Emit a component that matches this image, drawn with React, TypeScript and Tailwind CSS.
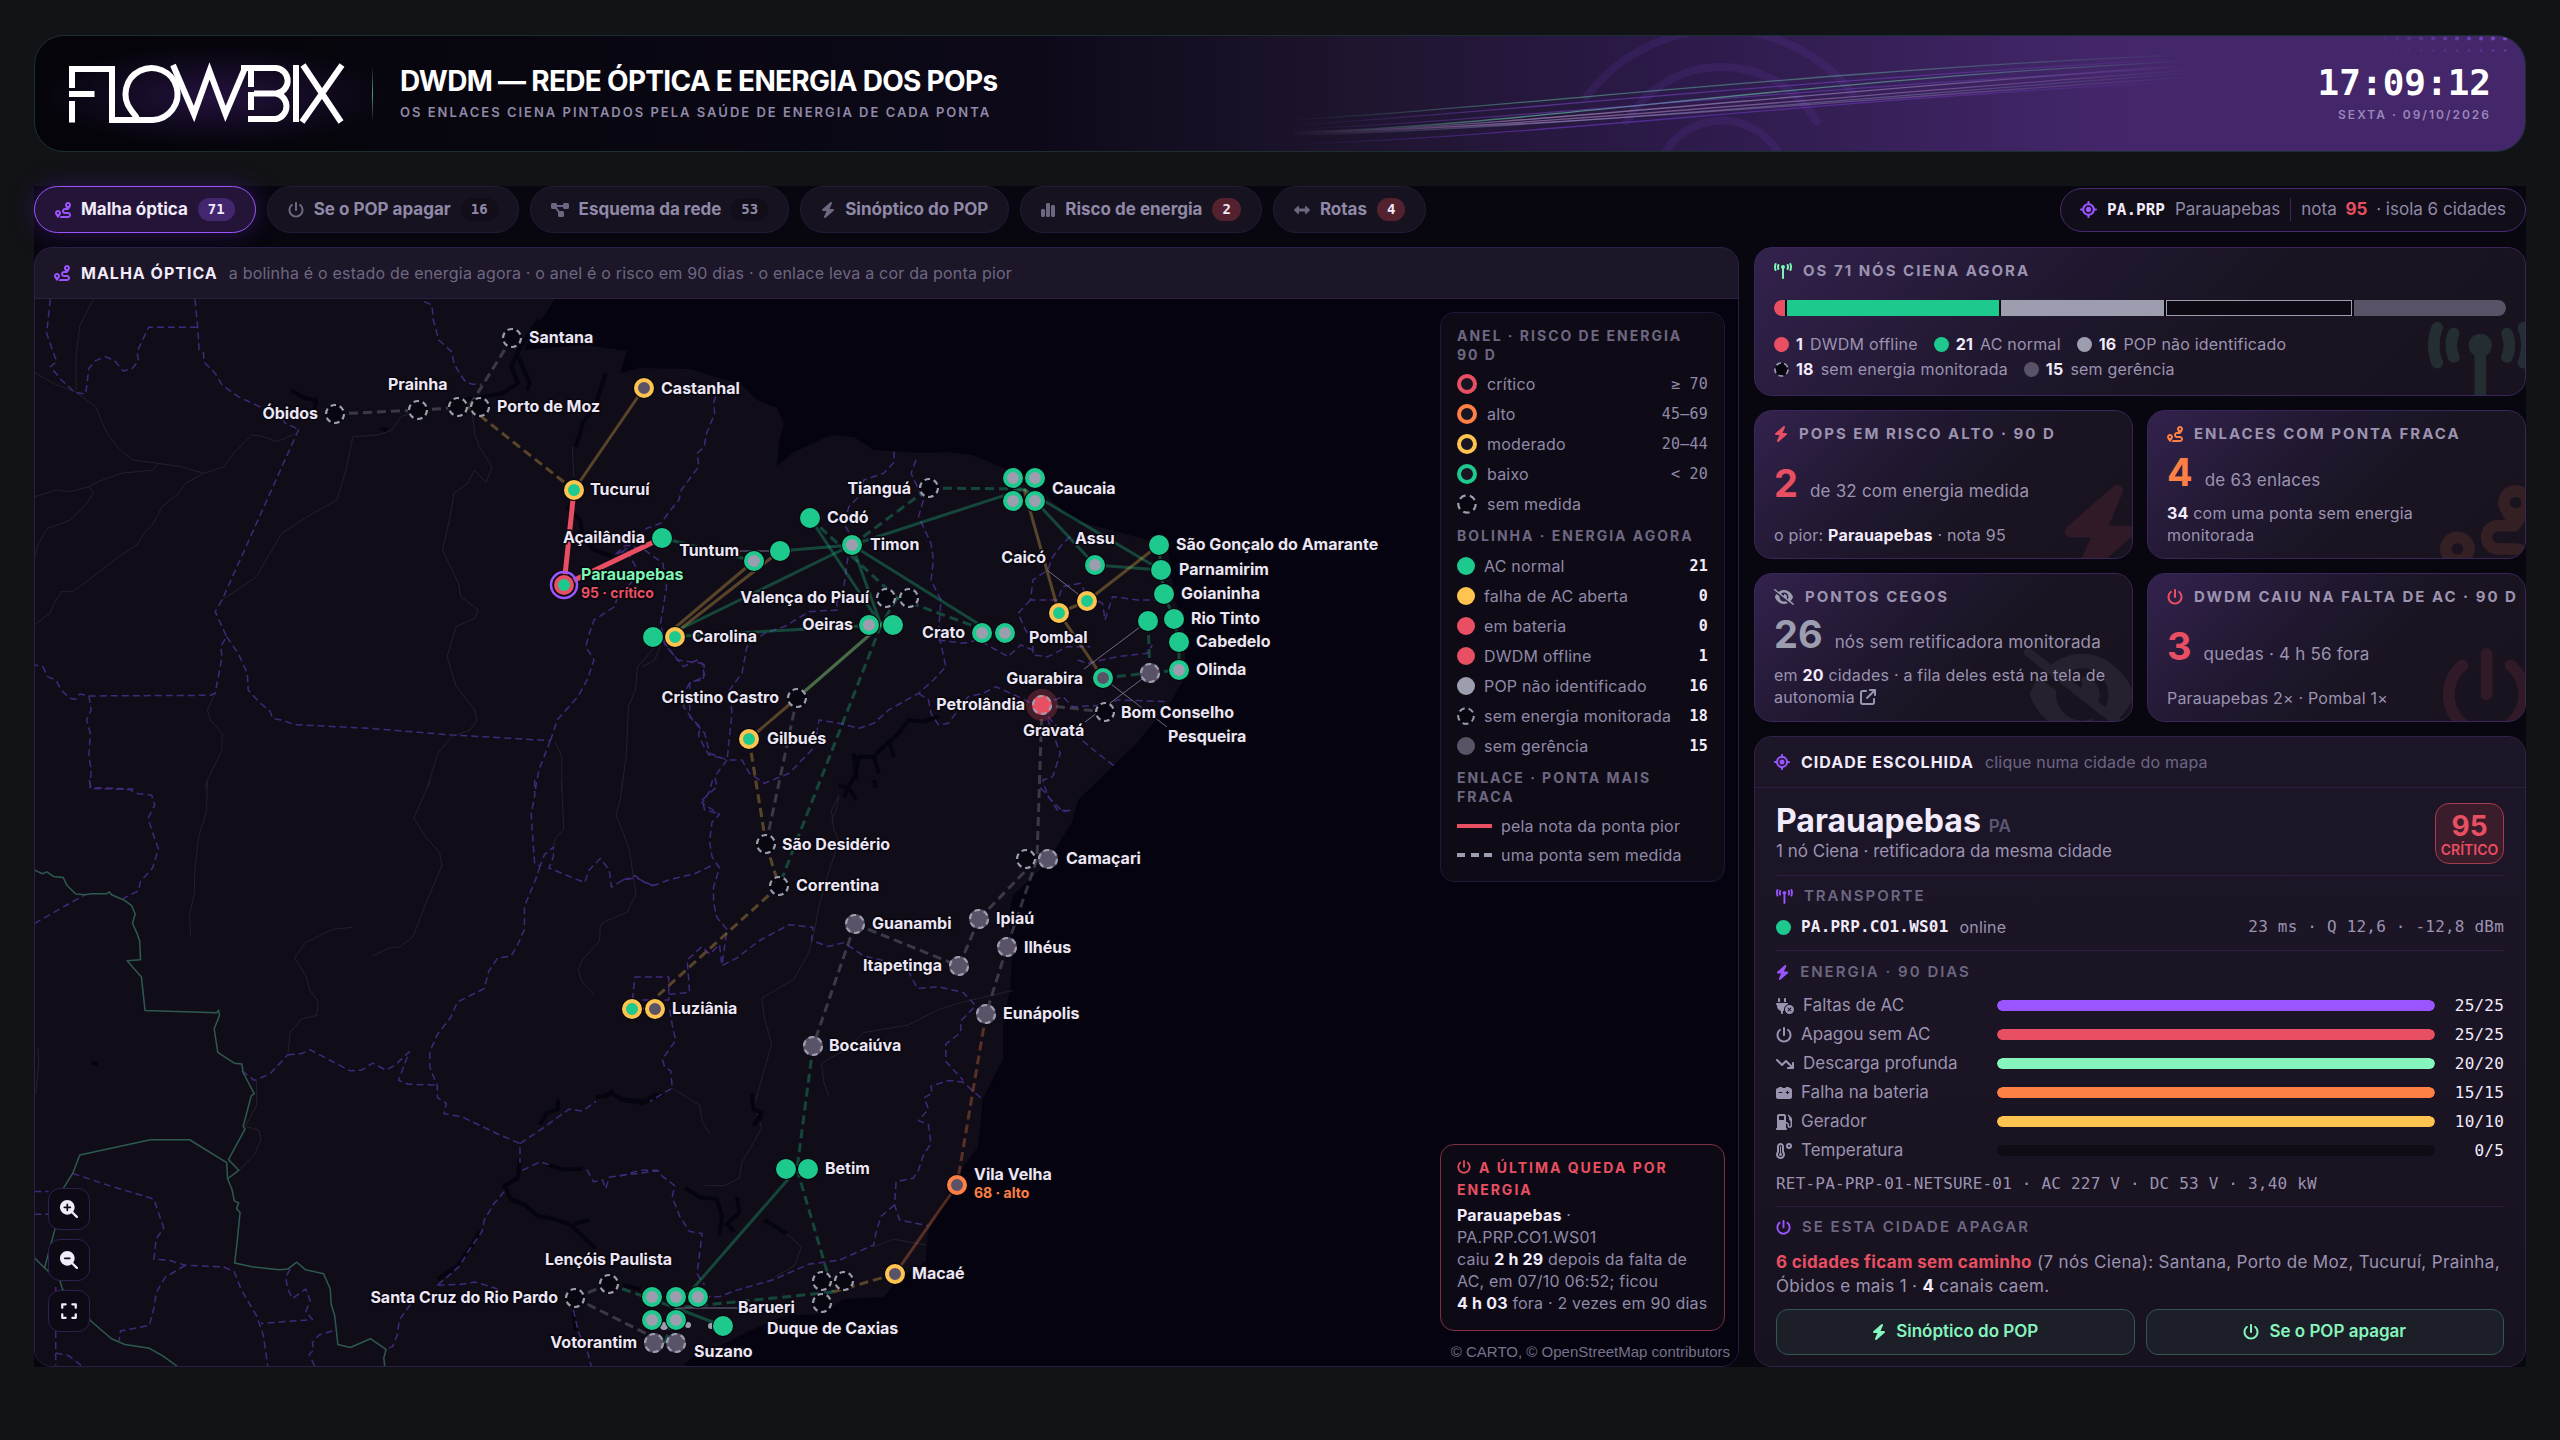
import React from "react";
import type { ReactNode } from "react";
import {
  FaArrowTrendDown,
  FaArrowUpRightFromSquare,
  FaBolt,
  FaCarBattery,
  FaChartSimple,
  FaDiagramProject,
  FaExpand,
  FaEyeSlash,
  FaGasPump,
  FaLeftRight,
  FaLocationCrosshairs,
  FaMagnifyingGlassMinus,
  FaMagnifyingGlassPlus,
  FaPlugCircleXmark,
  FaPowerOff,
  FaRoute,
  FaTemperatureHigh,
  FaTowerBroadcast,
} from "react-icons/fa6";
import type { IconType } from "react-icons";

const MONO = "font-['DejaVu_Sans_Mono',monospace]";

/* Glyphs that are not square keep their own proportions; the caller sets only the height. */
const ASPECT = new Map<IconType, string>([
  [FaTowerBroadcast, "aspect-[9/8]"],
  [FaPlugCircleXmark, "aspect-[9/8]"],
  [FaArrowTrendDown, "aspect-[9/8]"],
  [FaDiagramProject, "aspect-[9/8]"],
  [FaEyeSlash, "aspect-[5/4]"],
  [FaBolt, "aspect-[7/8]"],
  [FaChartSimple, "aspect-[7/8]"],
]);

function Glyph({ icon: Icon, className }: { icon: IconType; className: string }) {
  return <Icon className={`w-auto shrink-0 ${ASPECT.get(Icon) ?? "aspect-square"} ${className}`} />;
}

/* ---------- Header ---------- */

function Logo() {
  return (
    <svg viewBox="0 0 277 60" className="h-[60px] w-[277px] shrink-0 overflow-visible" fill="none" stroke="#fff" strokeWidth="6" role="img" aria-label="Flowbix">
      <defs>
        <radialGradient id="logoGlow">
          <stop offset="0" stopColor="#3a1c66" stopOpacity="0.55" />
          <stop offset="1" stopColor="#3a1c66" stopOpacity="0" />
        </radialGradient>
      </defs>
      <ellipse cx="145" cy="32" rx="175" ry="50" fill="url(#logoGlow)" stroke="none" />
      <path d="M3 24V5H43V56H84A26 26 0 1 0 62 46L68 54" />
      <path d="M0 30H25.500M3 37V58.500" />
      <path d="M104 1L125 50L140.500 7L156.500 50L176 4" strokeMiterlimit="10" />
      <path d="M172 4H207A12.800 12.800 0 0 1 207 29.500H185M207 29.500A13 13 0 0 1 207 55H179" />
      <path d="M182 4V23M182 28V46" />
      <path d="M227 1V58M234 1L272 58M273 1L233 58" />
    </svg>
  );
}

function HeaderArt() {
  const strands = [
    ["M0 84C140 74 380 36 640 20", "#6fd8b0", 0.45],
    ["M0 90C150 76 380 44 645 24", "#8a50e0", 0.5],
    ["M0 97C170 90 360 46 650 26", "#6fd8b0", 0.6],
    ["M0 98C170 90 380 56 650 31", "#e6c8ff", 0.45],
    ["M0 99C180 90 390 62 655 35", "#d9a8e8", 0.45],
    ["M0 100C190 92 400 64 655 38", "#9fb4d8", 0.4],
    ["M0 94C160 84 390 50 650 33", "#8a50e0", 0.45],
    ["M0 96C200 92 390 66 655 42", "#b48ad8", 0.45],
    ["M0 109C180 100 380 66 650 46", "#7d3fe0", 0.5],
  ] as const;
  return (
    <svg viewBox="0 0 1246 116" preserveAspectRatio="xMaxYMid slice" className="absolute inset-y-0 right-0 h-full w-1/2" fill="none" aria-hidden="true">
      <defs>
        <linearGradient id="strandFade" x1="0" x2="1" y1="0" y2="0">
          <stop offset="0" stopColor="#fff" stopOpacity="0" />
          <stop offset="0.04" stopColor="#fff" stopOpacity="0.1" />
          <stop offset="0.28" stopColor="#fff" />
          <stop offset="0.7" stopColor="#fff" stopOpacity="0.8" />
          <stop offset="1" stopColor="#fff" stopOpacity="0" />
        </linearGradient>
        <mask id="strandMask" maskUnits="userSpaceOnUse" x="0" y="0" width="920" height="116">
          <rect x="0" y="0" width="920" height="116" fill="url(#strandFade)" />
        </mask>
      </defs>
      <g stroke="#6b3bb0" strokeOpacity="0.17" strokeWidth="8" strokeLinecap="round">
        <path d="M307 61A168 168 0 0 1 573 58" />
        <path d="M347 86A110 110 0 0 1 537 86" />
        <path d="M386 116A66 66 0 0 1 498 116" />
      </g>
      <g mask="url(#strandMask)">
        <g strokeWidth="1.3">
          {strands.map(([d, c, o]) => (
            <path key={d} d={d} stroke={c} strokeOpacity={o} transform="translate(14 0) scale(1.36 1)" />
          ))}
        </g>
      </g>
      <g fill="#8a55e6">
        {Array.from({ length: 11 }, (_, i) => (
          <React.Fragment key={i}>
            <circle cx={1106 + i * 12} cy="3" r="2" fillOpacity={0.08 + i * 0.07} />
            <circle cx={1106 + i * 12} cy="15" r="1.500" fillOpacity={0.05 + i * 0.03} />
          </React.Fragment>
        ))}
      </g>
    </svg>
  );
}

function Header() {
  return (
    <header className="relative flex h-[117px] items-center overflow-hidden rounded-[30px] border border-[#1b2f2f] bg-[linear-gradient(90deg,#050409_0%,#08060f_20%,#0d0919_40%,#1d142c_52%,#2b1a48_65%,#44276b_84%,#44276b_100%)] px-[34px]">
      <HeaderArt />
      <Logo />
      <div className="relative ml-[26px] h-14 w-px bg-gradient-to-b from-transparent via-[#4f9a80] to-transparent" />
      <div className="relative ml-[27px] pb-[3px]">
        <h1 className="text-[28px] leading-9 font-bold tracking-tight text-white">DWDM — REDE ÓPTICA E ENERGIA DOS POPs</h1>
        <p className="mt-[3px] text-[13px] leading-5 font-semibold tracking-[2px] text-[#9089a8]">OS ENLACES CIENA PINTADOS PELA SAÚDE DE ENERGIA DE CADA PONTA</p>
      </div>
      <div className="relative ml-auto text-right">
        <div className={`${MONO} text-[36px] leading-10 font-bold tracking-normal text-white`}>17:09:12</div>
        <div className="mt-[2px] text-[12px] leading-5 font-semibold tracking-[2px] text-[#9a86b8]">SEXTA · 09/10/2026</div>
      </div>
    </header>
  );
}

/* ---------- Tabs ---------- */

const TABS: { icon: IconType; label: string; count?: string; alert?: boolean }[] = [
  { icon: FaRoute, label: "Malha óptica", count: "71" },
  { icon: FaPowerOff, label: "Se o POP apagar", count: "16" },
  { icon: FaDiagramProject, label: "Esquema da rede", count: "53" },
  { icon: FaBolt, label: "Sinóptico do POP" },
  { icon: FaChartSimple, label: "Risco de energia", count: "2", alert: true },
  { icon: FaLeftRight, label: "Rotas", count: "4", alert: true },
];

function Tabs() {
  return (
    <div className="flex items-center justify-between tracking-normal">
      <nav className="flex gap-[11px]">
        {TABS.map((t, i) => {
          const on = i === 0;
          return (
            <button
              key={t.label}
              className={`flex h-[47px] items-center gap-[10px] rounded-full border px-[20px] text-[17px] font-bold ${
                on ? "border-[#9a55ff] bg-[#241538] text-[#f1ebfb] shadow-[0_0_22px_#2c1650]" : "border-[#251b36] bg-[#17121f] text-[#9089a8]"
              }`}
            >
              <Glyph icon={t.icon} className={`h-4 ${on ? "text-[#9a55ff]" : "text-[#6d6782]"}`} />
              {t.label}
              {t.count && (
                <span
                  className={`${MONO} rounded-full px-[10px] text-[14px] leading-[23px] ${
                    on ? "bg-[#43266e] text-[#f1ebfb]" : t.alert ? "bg-[#54222f] text-[#f1ebfb]" : "bg-[#120e19] text-[#9089a8]"
                  }`}
                >
                  {t.count}
                </span>
              )}
            </button>
          );
        })}
      </nav>
      <div className="flex h-[44px] items-center gap-[10px] rounded-full border border-[#482a73] bg-[#120e19] px-[19px] text-[17px] text-[#9089a8]">
        <FaLocationCrosshairs className="size-[17px] text-[#9a55ff]" />
        <b className={`${MONO} text-[16px] text-[#f1ebfb]`}>PA.PRP</b>
        <span>Parauapebas</span>
        <span className="h-[23px] w-px bg-[#3a2856]" />
        <span>
          nota <b className="mx-1 text-[#e84f62]">95</b> · isola 6 cidades
        </span>
      </div>
    </div>
  );
}

/* ---------- Map base ---------- */

type Sheet = { at: string; borders: string[]; rivers: string[]; water: string[]; nations: string[] };

const SHEETS: Sheet[] = [
  {
    at: "translate(20 290) scale(.4592 .3333)",
    borders: [
      "66,28 62,80 58,130 68,170 80,215 66,230 90,270 120,308 143,312 150,235 165,212 185,200 205,210 225,243 245,235 258,212 255,185 280,112 387,112",
      "381,28 387,112 390,180 400,190 400,215 425,250 440,285 475,320 522,350 560,365 578,400 607,418",
      "607,418 440,930 425,965 450,1040 437,1070 440,1100 425,1210 415,1216 150,1218 130,1212 122,1228 108,1225 90,1200 78,1170 60,1160 50,1130 32,1125",
      "450,1040 475,1090 495,1150 497,1200 520,1235 545,1265 550,1285 570,1290 598,1304 760,1315 940,1335 1155,1352",
      "150,1218 155,1260 145,1290 153,1330 150,1400 155,1440 152,1493 248,1497",
      "880,35 897,45 900,90 912,150 940,185 945,220 955,245 970,275 985,283 1005,283",
      "1155,1352 1170,1290 1215,1220 1235,1170 1250,1110 1232,1070 1240,1030 1250,990 1295,950 1300,925 1330,880 1345,840 1320,780 1295,795 1320,765 1360,780 1400,820 1408,890 1395,1000 1405,1065 1445,1130 1475,1110 1490,1125 1488,1170 1460,1175 1450,1200 1445,1250 1460,1280 1480,1310 1478,1340 1500,1395 1530,1405",
      "1155,1352 1130,1440 1122,1500",
      "1515,320 1510,340 1513,370 1495,430 1490,470 1475,490 1478,530 1440,600 1435,630 1420,655 1395,700 1365,715 1345,740 1310,790",
    ],
    rivers: [
      "160,28 140,80 130,110 122,200 122,300",
      "32,248 80,285 120,305 165,350 175,385 190,430 215,475 245,510 300,520 350,530 400,550",
      "32,620 80,600 110,605 150,590 170,575 220,550 290,540 300,520",
      "150,590 160,610 140,650 110,690 60,715 40,760 32,800",
      "32,1005 65,970 75,940 90,905 115,905 150,870 215,800 255,765 270,730 290,700 310,650 345,610 360,580 400,550 445,530 465,490 505,435 530,440 560,455 600,430",
      "440,930 515,860 540,800 570,730 620,685 690,630 710,540 725,440 780,435 810,420 830,380 860,365",
      "985,370 990,430 1000,470 1028,530 1015,578 990,540 975,580 945,610 935,690 920,780 955,880 960,920 998,960 990,985 950,1010 930,1100 950,1190 990,1260 995,1290 980,1320 940,1340 910,1390 885,1500",
      "1206,560 1203,470",
      "425,1210 408,1260 415,1290 440,1330 440,1380 405,1480 405,1500",
      "1390,1060 1345,1130 1340,1200 1325,1250 1320,1400 1310,1500",
      "1165,1355 1180,1400 1180,1500",
    ],
    water: [
      "1130,90 1090,170 1070,230 1085,280 1050,310 990,325 930,340",
      "1085,200 1110,280 1105,300",
      "1275,250 1255,340 1225,400 1220,430 1210,470",
      "590,300 620,325 645,330 640,380",
      "1190,650 1220,690 1225,740 1250,780 1290,800",
      "785,415 800,420",
    ],
    nations: [],
  },
  {
    at: "translate(640 400) scale(.4974 .3333)",
    borders: [
      "510,155 512,185 490,220 450,240 440,290 420,320 410,370 425,410 420,450 410,560 395,610 398,630 340,635 290,680 250,700 215,740 205,820 180,870 185,940 175,1080",
      "555,180 545,220 570,300 560,350 585,430 590,480 585,540 605,600 600,700 615,800 590,840 560,880 500,930 470,970 440,985 400,970 360,960 355,1000 345,1050 300,1120 250,1150 220,1120 205,1080 175,1080 140,1060 130,1000 100,950 100,850 130,830 125,790 75,780 45,720",
      "865,410 850,430 830,470 820,510 790,540 785,600 840,600 850,560 885,550 900,590 930,610 935,660 950,590 1000,600 1060,600",
      "785,600 760,640 775,690 790,720 790,765 820,770 860,740 905,740",
      "600,720 650,730 680,720 740,770 765,735 790,750",
      "880,780 900,790 960,770 1020,760 1030,735",
      "560,880 580,900 585,940 600,975 620,970 640,930 660,890 690,880 715,860 760,890 800,920 850,890 870,920 940,915 960,900 1060,905",
      "820,950 850,1000 880,1010 920,1060 955,1100",
      "820,960 835,1020 845,1060 830,1130 810,1140 820,1190 850,1235 870,1230",
      "175,1080 150,1130 155,1160 125,1200 130,1230 155,1240",
    ],
    rivers: ["45,720 30,780 5,800", "400,1190 395,1230 385,1260"],
    water: ["600,950 570,965 540,960 520,1000 490,1040 470,1070 440,1070 435,1110 430,1130 410,1190", "470,1070 480,1120", "430,1060 435,1140", "500,1020 510,1070"],
    nations: [],
  },
  {
    at: "translate(20 780) scale(.4464 .3827)",
    borders: [
      "155,0 160,22 245,25 260,35 295,40 302,65 287,100 295,130 310,180 297,230 270,265 265,290 230,310",
      "32,375 145,300",
      "32,1075 64,1075",
      "32,1135 64,1135",
      "118,1028 200,1060 300,1095 310,1130 322,1170 305,1200 300,1252 335,1255 370,1268 455,1272 480,1285 495,1330 510,1360 530,1400 545,1450 555,1532",
      "370,1268 325,1300 305,1340 300,1380 290,1425 225,1440 222,1465",
      "80,1325 80,1530",
      "80,1497 110,1505 140,1532",
      "605,1278 595,1300 600,1330 610,1355 640,1330 650,1360 640,1390 655,1410 540,1420",
      "700,1440 670,1450 655,1470 658,1490 648,1500 660,1532",
      "600,718 630,715 650,705 740,760 765,758 790,740 820,758 840,745 872,710 848,785 870,795 930,797",
      "497,760 525,785 560,768 600,718",
      "1153,0 1153,40 1145,90 1153,220 1165,225 1175,195 1195,175 1195,200 1185,230 1265,268 1275,235 1300,205 1320,235 1325,280 1350,262 1380,255 1420,278",
      "1165,225 1155,260 1130,330 1130,390 1115,430 1100,460 1070,465 1050,500 1040,545 980,580 965,620 935,665 918,710 918,750 935,800 935,830 955,845 950,872 990,880 1070,925 1120,950 1120,1000",
      "1085,1075 1060,1110 1040,1150 1035,1180 1005,1230 985,1270 935,1320",
      "1120,950 1165,915 1230,860 1260,865 1290,840",
      "1125,1020 1165,998 1185,1005",
      "1270,1018 1285,1050 1305,1045 1312,1068 1320,1038 1370,1030 1440,1020",
      "935,1320 985,1318 1020,1312 1070,1330",
      "875,1370 850,1410 845,1450 835,1480 820,1488",
      "1240,1385 1250,1440 1270,1490 1280,1532",
    ],
    rivers: [
      "420,0 418,80 400,150 392,230 390,300 380,350 382,405",
      "920,0 905,40 882,100 910,150 940,190 945,225 910,320 880,410 850,437 830,437 790,460",
      "745,385 700,390 640,425 615,465 640,510 650,550 668,580 665,615 630,625 605,660 600,718",
      "530,785 530,850 505,905 535,915 540,940 525,980 490,1020",
      "1213,0 1218,130 1200,150 1195,175",
      "1350,0 1345,50 1335,90 1365,180 1380,300 1360,345 1310,370 1300,380 1298,420 1260,470 1250,495 1260,530 1285,560",
      "40,700 42,740 35,820",
    ],
    water: [
      "1165,900 1180,870 1205,860 1205,835",
      "1290,830 1325,820 1350,835 1395,845 1440,820",
      "1120,990 1115,1040 1085,1060 1100,1095 1130,1110 1160,1140 1190,1145 1230,1160 1250,1180 1290,1225",
      "1240,1160 1275,1150",
      "1180,1005 1220,1018 1260,1016",
      "935,1305 980,1270 1010,1220 1030,1180",
      "1310,830 1330,810",
      "1350,1320 1390,1330",
      "1240,1390 1245,1440",
      "160,738 175,742",
    ],
    nations: [
      "32,235 50,245 60,240 75,252 97,255 105,275 125,298 145,300 160,297 195,297 200,292 205,300 235,315 250,328 258,350 252,375 262,400 268,420 270,470 240,472 272,515 280,602 440,608 445,602 447,615 435,650 443,712 480,740 497,742 500,765 525,820 518,825 500,905 504,912 467,992 490,1020 465,1042 475,1070 480,1100 490,1105 485,1120 493,1130 487,1200 481,1262 520,1272 580,1280 600,1278 620,1260 640,1280 680,1290 695,1330 697,1370 705,1400 712,1475 740,1483 785,1460 820,1488 815,1510 817,1532",
      "465,1042 463,1000 380,940 292,940 134,980 118,1028 98,1065 78,1175 55,1275",
      "32,1248 55,1275 90,1310 95,1330 160,1415 205,1460 235,1475 290,1485 320,1505 352,1532",
    ],
  },
  {
    at: "translate(620 780) scale(.4974 .3827)",
    borders: [
      "186,0 180,30 165,60 200,90 185,110 180,160 185,200 200,230 188,280 188,320 195,360 215,390 205,485 235,465 280,420 340,378 388,385 385,420 420,435 450,425 490,460 540,475 580,500 598,545 640,540 690,555 715,590 685,630 685,660 655,690 655,735 690,785",
      "5,262 30,250 50,268 70,275 100,260 150,245 190,220",
      "25,575 30,515 98,515 98,575 25,575",
      "98,560 140,555 135,470 165,435 180,455 200,430 205,485",
      "100,600 105,640 112,680 85,730 90,750 102,760 105,805 60,840",
      "725,830 690,790 660,785 625,800 628,818 612,830 620,860 600,890 620,900 625,950 610,980 600,1020 590,1040 555,1050 552,1110 562,1150 620,1165",
      "552,1110 525,1140 515,1180 510,1215 440,1255 380,1265 310,1305 230,1335 200,1350 150,1350",
      "0,1035 40,1020 75,1020 85,1035 110,1060 105,1090 120,1140 140,1180 165,1185 155,1290 170,1320",
      "845,20 860,40 880,80 910,80",
    ],
    rivers: [
      "440,40 425,80 430,130 440,160 415,260 400,330 390,400 380,450 350,520 285,570 290,620 305,690 285,780 270,850 285,910 245,1000 240,1040 210,1060 170,1060",
      "105,805 160,850 165,890 180,925",
      "790,550 740,565 690,580 640,600 580,640 490,660 460,700 405,740 410,790 420,825",
      "615,1215 550,1200 510,1220",
      "330,1180 365,1220 350,1270 310,1300",
    ],
    water: ["440,15 460,20 475,50", "510,0 515,20", "265,820 268,860 285,870 270,900 285,880", "130,1065 160,1090 195,1095 205,1140 200,1190", "235,1090 240,1130 215,1160 230,1180", "290,1150 335,1185", "0,835 50,840 75,820"],
    nations: [],
  },
];

const OCEAN =
  "M555 299L541 320L528 342L524 350L585 345L627 351L620 373L640 368L690 369L718 378L740 383L757 400L777 408L784 423L779 443L777 466L794 452L831 435L854 437L874 450L919 453L948 452L973 455L1008 470L1048 497L1073 520L1118 532L1167 545L1175 600L1185 633L1185 677L1172 700L1137 743L1112 767L1078 800L1072 822L1053 853L1038 872L1013 895L1008 918L1013 948L1010 990L1003 1025L1003 1059L983 1098L978 1147L958 1174L938 1212L928 1232L926 1262L899 1278L884 1297L844 1299L819 1314L784 1316L749 1331L720 1346L695 1354L682 1367H1740V299Z";

/* ---------- Optical network ---------- */

const G = "#1dc98c";
const Y = "#ffc34f";
const O = "#ff8044";
const R = "#e84f62";
const N = "#9c9eb0";
const D = "#5a5368";

type Link = [number, number, number, number, string, boolean?];
const LINKS: Link[] = [
  [512, 338, 469, 407, N, true],
  [335, 414, 418, 410, N, true],
  [418, 410, 469, 407, N, true],
  [469, 407, 574, 490, Y, true],
  [644, 388, 574, 490, Y],
  [662, 538, 754, 561, G],
  [780, 551, 852, 545, G],
  [664, 637, 754, 561, Y],
  [670, 637, 780, 551, Y],
  [664, 637, 852, 545, G],
  [664, 637, 881, 625, G],
  [810, 518, 881, 625, G],
  [810, 518, 897, 598, G, true],
  [852, 545, 881, 625, G],
  [852, 545, 993, 633, G],
  [852, 545, 929, 488, G, true],
  [929, 488, 1024, 489, G, true],
  [852, 545, 1024, 489, G],
  [897, 598, 993, 633, G, true],
  [897, 598, 881, 625, G, true],
  [1024, 489, 1095, 565, G],
  [1024, 489, 1161, 570, G],
  [1095, 565, 1161, 570, G],
  [1024, 489, 1059, 613, Y],
  [1059, 613, 1087, 601, Y],
  [1087, 601, 1159, 545, Y],
  [1059, 613, 1103, 678, Y],
  [1159, 545, 1161, 570, G],
  [1161, 570, 1164, 594, G],
  [1164, 594, 1174, 619, G],
  [1174, 619, 1179, 642, G],
  [1179, 642, 1179, 670, G],
  [1148, 621, 1150, 673, G, true],
  [1150, 673, 1179, 670, G, true],
  [1103, 678, 1150, 673, G, true],
  [1042, 705, 1105, 712, N, true],
  [1042, 705, 1037, 859, N, true],
  [881, 625, 797, 698, Y],
  [881, 625, 797, 698, G],
  [797, 698, 749, 739, Y],
  [749, 739, 766, 844, Y, true],
  [797, 698, 766, 844, N, true],
  [881, 625, 779, 886, G, true],
  [766, 844, 779, 886, Y, true],
  [779, 886, 643, 1009, Y, true],
  [855, 924, 959, 966, N, true],
  [959, 966, 979, 919, N, true],
  [979, 919, 1037, 859, N, true],
  [1037, 859, 1007, 947, N, true],
  [1007, 947, 986, 1014, N, true],
  [986, 1014, 957, 1185, O, true],
  [957, 1185, 895, 1274, O],
  [895, 1274, 833, 1292, Y, true],
  [855, 924, 813, 1046, N, true],
  [813, 1046, 797, 1169, G, true],
  [797, 1169, 676, 1308, G],
  [797, 1169, 833, 1292, G, true],
  [833, 1292, 676, 1308, G, true],
  [676, 1308, 723, 1326, G],
  [609, 1284, 676, 1308, G, true],
  [575, 1298, 609, 1284, N, true],
  [575, 1298, 665, 1343, N, true],
  [676, 1308, 665, 1343, G, true],
];

const LEADERS = [
  [738, 551, 780, 551],
  [1047, 570, 1087, 601],
  [1084, 669, 1148, 621],
  [1085, 722, 1150, 673],
  [1103, 678, 1167, 727],
  [676, 1308, 738, 1308],
];

/* x, y, core colour, ring colour; a missing ring means "no measurement" (dashed) */
type Dot = [number, number, string, string?];
const VOID = "#08060e";
const DOTS: Dot[] = [
  [512, 338, VOID], [335, 414, VOID], [418, 410, VOID], [458, 407, VOID], [480, 407, VOID],
  [644, 388, D, Y], [574, 490, G, Y], [662, 538, G, G], [564, 585, G, R],
  [653, 637, G, G], [675, 637, G, Y], [810, 518, G, G], [780, 551, G, G], [754, 561, N, G],
  [852, 545, N, G], [929, 488, VOID], [1013, 478, N, G], [1035, 478, N, G], [1013, 501, N, G], [1035, 501, N, G],
  [1095, 565, N, G], [1087, 601, G, Y], [1059, 613, G, Y], [1159, 545, G, G], [1161, 570, G, G], [1164, 594, G, G],
  [1148, 621, G, G], [1174, 619, G, G], [1179, 642, G, G], [1179, 670, N, G], [1150, 673, D], [1103, 678, D, G],
  [1042, 705, R], [1105, 712, VOID], [886, 598, VOID], [909, 598, VOID], [869, 625, N, G], [893, 625, G, G],
  [982, 633, N, G], [1005, 633, N, G], [797, 698, VOID], [749, 739, G, Y], [766, 844, VOID], [779, 886, VOID],
  [1026, 859, VOID], [1048, 859, D], [855, 924, D], [979, 919, D], [1007, 947, D], [959, 966, D], [986, 1014, D],
  [813, 1046, D], [632, 1009, G, Y], [655, 1009, D, Y], [786, 1169, G, G], [808, 1169, G, G], [957, 1185, D, O],
  [895, 1274, D, Y], [822, 1281, VOID], [844, 1281, VOID], [822, 1303, VOID],
  [652, 1297, N, G], [676, 1297, N, G], [698, 1297, N, G], [652, 1320, N, G], [676, 1320, N, G],
  [723, 1326, G, G], [654, 1343, D], [676, 1343, D], [609, 1284, VOID], [575, 1298, VOID],
];

/* x, y (middle), name, anchored at its end */
const CITIES: [number, number, string, boolean?][] = [
  [529, 337, "Santana"], [388, 384, "Prainha"], [318, 413, "Óbidos", true], [497, 406, "Porto de Moz"],
  [661, 388, "Castanhal"], [590, 489, "Tucuruí"], [645, 537, "Açailândia", true], [692, 636, "Carolina"],
  [827, 517, "Codó"], [739, 550, "Tuntum", true], [870, 544, "Timon"], [911, 488, "Tianguá", true],
  [1052, 488, "Caucaia"], [1075, 538, "Assu"], [1046, 557, "Caicó", true], [1029, 637, "Pombal"],
  [1176, 544, "São Gonçalo do Amarante"], [1179, 569, "Parnamirim"], [1181, 593, "Goianinha"],
  [1191, 618, "Rio Tinto"], [1196, 641, "Cabedelo"], [1196, 669, "Olinda"], [1083, 678, "Guarabira", true],
  [1025, 704, "Petrolândia", true], [1023, 730, "Gravatá"], [1121, 712, "Bom Conselho"], [1168, 736, "Pesqueira"],
  [869, 597, "Valença do Piauí", true], [853, 624, "Oeiras", true], [965, 632, "Crato", true],
  [779, 697, "Cristino Castro", true], [767, 738, "Gilbués"], [782, 844, "São Desidério"], [796, 885, "Correntina"],
  [1066, 858, "Camaçari"], [872, 923, "Guanambi"], [996, 918, "Ipiaú"], [1024, 947, "Ilhéus"],
  [942, 965, "Itapetinga", true], [1003, 1013, "Eunápolis"], [829, 1045, "Bocaiúva"], [672, 1008, "Luziânia"],
  [825, 1168, "Betim"], [974, 1174, "Vila Velha"], [912, 1273, "Macaé"], [767, 1328, "Duque de Caxias"],
  [738, 1307, "Barueri"], [694, 1351, "Suzano"], [637, 1342, "Votorantim", true], [545, 1259, "Lençóis Paulista"],
  [558, 1297, "Santa Cruz do Rio Pardo", true],
];

const LABEL = "font-bold [dominant-baseline:central] [paint-order:stroke] stroke-[#08060e] stroke-[3px]";

function NetworkMap() {
  return (
    <svg viewBox="35 299 1703 1067" preserveAspectRatio="xMinYMin slice" className="absolute inset-0 h-full w-full tracking-normal" role="img" aria-label="Mapa da malha óptica">
      <rect x="0" y="280" width="1760" height="1100" fill="#110d18" />
      <path d={OCEAN} fill="#05030f" />
      {SHEETS.map((s) => (
        <g key={s.at} transform={s.at} fill="none" strokeLinejoin="round">
          {s.rivers.map((p) => (
            <polyline key={p} points={p} stroke="#24212c" strokeWidth="1" vectorEffect="non-scaling-stroke" />
          ))}
          {s.water.map((p) => (
            <polyline key={p} points={p} stroke="#06040e" strokeWidth="4" vectorEffect="non-scaling-stroke" />
          ))}
          {s.borders.map((p) => (
            <polyline key={p} points={p} stroke="#40297a" strokeWidth="1.500" strokeDasharray="7 4" vectorEffect="non-scaling-stroke" />
          ))}
          {s.nations.map((p) => (
            <polyline key={p} points={p} stroke="#2d5a50" strokeWidth="1.500" vectorEffect="non-scaling-stroke" />
          ))}
        </g>
      ))}
      <g strokeWidth="3">
        {LINKS.map(([x1, y1, x2, y2, c, dashed], i) => (
          <line key={i} x1={x1} y1={y1} x2={x2} y2={y2} stroke={c} strokeOpacity="0.300" strokeDasharray={dashed ? "9 5" : undefined} />
        ))}
      </g>
      <g stroke={R} strokeWidth="5">
        <line x1="574" y1="490" x2="564" y2="585" />
        <line x1="662" y1="538" x2="564" y2="585" />
      </g>
      <g stroke="#6e6880" strokeWidth="1">
        {LEADERS.map(([x1, y1, x2, y2]) => (
          <line key={`${x1}-${y1}`} x1={x1} y1={y1} x2={x2} y2={y2} />
        ))}
      </g>
      <g fill={N}>
        <circle cx="664" cy="1326" r="4" />
        <circle cx="688" cy="1325" r="3" />
        <circle cx="711" cy="1326" r="3" />
      </g>
      <circle cx="1042" cy="705" r="16" fill={R} fillOpacity="0.250" />
      {DOTS.map(([x, y, core, ring]) =>
        ring ? (
          <g key={`${x}-${y}`}>
            <circle cx={x} cy={y} r="11" fill="#08060e" />
            <circle cx={x} cy={y} r="8" fill={core} stroke={ring} strokeWidth="4" />
          </g>
        ) : (
          <g key={`${x}-${y}`}>
            <circle cx={x} cy={y} r="10" fill={core} />
            <circle cx={x} cy={y} r="9" fill="none" stroke={N} strokeWidth="2.200" strokeDasharray="5.600 3.800" />
          </g>
        ),
      )}
      <circle cx="564" cy="585" r="13" fill="none" stroke="#9a55ff" strokeWidth="2.500" />
      {CITIES.map(([x, y, name, end]) => (
        <text key={name} x={x} y={y} textAnchor={end ? "end" : "start"} className={`${LABEL} fill-[#ece6f6] text-[16px]`}>
          {name}
        </text>
      ))}
      <text x="581" y="574" className={`${LABEL} fill-[#7df5b4] text-[16px]`}>Parauapebas</text>
      <text x="581" y="592" className={`${LABEL} fill-[#e84f62] text-[14px]`}>95 · crítico</text>
      <text x="974" y="1192" className={`${LABEL} fill-[#ff8044] text-[14px]`}>68 · alto</text>
    </svg>
  );
}

function DashedDot({ size }: { size: number }) {
  return (
    <svg viewBox="0 0 20 20" width={size} height={size} className="shrink-0" aria-hidden="true">
      <circle cx="10" cy="10" r="8.700" fill="#08060e" stroke={N} strokeWidth="2.200" strokeDasharray="6.500 4.400" />
    </svg>
  );
}

function LegendTitle({ children, className = "" }: { children: ReactNode; className?: string }) {
  return <h3 className={`text-[14px] leading-[19px] font-bold tracking-[2px] text-[#6d6782] ${className}`}>{children}</h3>;
}

function Legend() {
  const rings = [
    ["border-[#e84f62]", "crítico", "≥ 70"],
    ["border-[#ff8044]", "alto", "45–69"],
    ["border-[#ffc34f]", "moderado", "20–44"],
    ["border-[#1dc98c]", "baixo", "< 20"],
  ];
  const states = [
    ["bg-[#1dc98c]", "AC normal", "21"],
    ["bg-[#ffc34f]", "falha de AC aberta", "0"],
    ["bg-[#e84f62]", "em bateria", "0"],
    ["bg-[#e84f62]", "DWDM offline", "1"],
    ["bg-[#9c9eb0]", "POP não identificado", "16"],
    ["", "sem energia monitorada", "18"],
    ["bg-[#5a5368]", "sem gerência", "15"],
  ];
  return (
    <aside className="absolute top-[13px] right-[13px] w-[285px] rounded-[14px] border border-[#1f1737] bg-[#0f0b16] px-4 pt-[13px] pb-3 text-[16px] text-[#9089a8]">
      <LegendTitle>ANEL · RISCO DE ENERGIA 90 D</LegendTitle>
      <ul className="mt-[5px]">
        {rings.map(([c, label, range]) => (
          <li key={label} className="flex h-[30px] items-center gap-[10px]">
            <span className={`size-5 rounded-full border-4 bg-[#1a1523] ${c}`} />
            {label}
            <span className={`${MONO} ml-auto text-[15px]`}>{range}</span>
          </li>
        ))}
        <li className="flex h-[29px] items-center gap-[10px]">
          <DashedDot size={20} />
          sem medida
        </li>
      </ul>
      <LegendTitle className="mt-2">BOLINHA · ENERGIA AGORA</LegendTitle>
      <ul className="mt-[6px]">
        {states.map(([c, label, n]) => (
          <li key={label} className="flex h-[30px] items-center gap-[9px]">
            {c ? <span className={`size-[18px] rounded-full ${c}`} /> : <DashedDot size={18} />}
            {label}
            <b className={`${MONO} ml-auto text-[15px] text-[#f1ebfb]`}>{n}</b>
          </li>
        ))}
      </ul>
      <LegendTitle className="mt-[7px]">ENLACE · PONTA MAIS FRACA</LegendTitle>
      <ul className="mt-[5px]">
        <li className="flex h-[29px] items-center gap-[9px]">
          <span className="w-[35px] border-t-4 border-[#e84f62]" />
          pela nota da ponta pior
        </li>
        <li className="flex h-[29px] items-center gap-[9px]">
          <span className="flex w-[35px] justify-between">
            <i className="h-1 w-2 bg-[#9c9eb0]" />
            <i className="h-1 w-2 bg-[#9c9eb0]" />
            <i className="h-1 w-2 bg-[#9c9eb0]" />
          </span>
          uma ponta sem medida
        </li>
      </ul>
    </aside>
  );
}

function LastOutage() {
  return (
    <aside className="absolute right-[13px] bottom-[35px] w-[285px] rounded-[14px] border border-[#7e2f41] bg-[#0d0a15] px-4 pt-3 pb-4 text-[16px] leading-[22px] text-[#9089a8]">
      <h3 className="mb-[3px] text-[14px] leading-[22px] font-bold tracking-[2px] text-[#e84f62]">
        <FaPowerOff className="mr-2 mb-1 inline size-[14px]" />A ÚLTIMA QUEDA POR ENERGIA
      </h3>
      <p>
        <b className="text-[#f1ebfb]">Parauapebas</b> ·<br />
        PA.PRP.CO1.WS01
        <br />
        caiu <b className="text-[#f1ebfb]">2 h 29</b> depois da falta de
        <br />
        AC, em 07/10 06:52; ficou
        <br />
        <b className="text-[#f1ebfb]">4 h 03</b> fora · 2 vezes em 90 dias
      </p>
    </aside>
  );
}

function PanelHead({ icon, title, note }: { icon: IconType; title: string; note: string }) {
  return (
    <div className="flex h-[51px] shrink-0 items-center gap-[11px] border-b border-[#2b1f3f] px-[19px]">
      <Glyph icon={icon} className="h-4 text-[#9a55ff]" />
      <h2 className="text-[16px] font-bold tracking-[1px] text-[#f1ebfb]">{title}</h2>
      <span className="text-[16px] text-[#6d6782]">{note}</span>
    </div>
  );
}

function MapPanel() {
  const tools: [IconType, string][] = [
    [FaMagnifyingGlassPlus, "Aproximar"],
    [FaMagnifyingGlassMinus, "Afastar"],
    [FaExpand, "Enquadrar"],
  ];
  return (
    <section className="flex flex-col overflow-hidden rounded-[18px] border border-[#2b1f47] bg-[#1c1628]">
      <PanelHead icon={FaRoute} title="MALHA ÓPTICA" note="a bolinha é o estado de energia agora · o anel é o risco em 90 dias · o enlace leva a cor da ponta pior" />
      <div className="relative grow overflow-hidden bg-[#110d18]">
        <NetworkMap />
        <Legend />
        <LastOutage />
        <div className="absolute bottom-[34px] left-[13px] flex flex-col gap-[9px]">
          {tools.map(([Icon, label]) => (
            <button key={label} aria-label={label} className="grid size-[42px] place-items-center rounded-xl border border-[#30204f] bg-[#0d0915] text-[#f1ebfb]">
              <Icon className="size-[18px]" />
            </button>
          ))}
        </div>
        <p className="absolute right-2 bottom-1 font-['Liberation_Sans',sans-serif] text-[15px] leading-[21px] tracking-normal text-[#77728a]">
          © <a href="#carto">CARTO</a>, © <a href="#osm">OpenStreetMap</a> contributors
        </p>
      </div>
    </section>
  );
}

/* ---------- Indicator cards ---------- */

const CARD =
  "relative overflow-hidden rounded-[18px] border border-[#3a2658] bg-[linear-gradient(135deg,#33224d_0%,#211831_35%,#1a1422_60%,#19131f_100%)] px-[19px]";

function CardTitle({ icon, tone, children }: { icon: IconType; tone: string; children: ReactNode }) {
  return (
    <h2 className="flex items-center gap-[11px] text-[15px] leading-[22px] font-bold tracking-[2px] whitespace-nowrap text-[#9b93b0]">
      <Glyph icon={icon} className={`h-4 ${tone}`} />
      {children}
    </h2>
  );
}

function NodesCard() {
  const items: [string, string, string][] = [
    ["bg-[#e84f62]", "1", "DWDM offline"],
    ["bg-[#1dc98c]", "21", "AC normal"],
    ["bg-[#9c9eb0]", "16", "POP não identificado"],
    ["", "18", "sem energia monitorada"],
    ["bg-[#5a5368]", "15", "sem gerência"],
  ];
  return (
    <section className={`${CARD} h-[149px] pt-[12px]`}>
      <CardTitle icon={FaTowerBroadcast} tone="text-[#7df5b4]">OS 71 NÓS CIENA AGORA</CardTitle>
      <div className="mt-[18px] flex h-4 gap-[2px] overflow-hidden rounded-full bg-[#0d0a14]">
        <i className="w-[11px] bg-[#e84f62]" />
        <i className="grow-[212] bg-[#1dc98c]" />
        <i className="grow-[164] bg-[#9c9eb0]" />
        <i className="grow-[184] border border-[#9c9eb0] bg-[#0d0a14]" />
        <i className="grow-[152] bg-[#5a5368]" />
      </div>
      <ul className="mt-[16px] flex max-w-[560px] flex-wrap gap-x-4 text-[16px] leading-[25px] text-[#9b93b0]">
        {items.map(([c, n, label]) => (
          <li key={label} className="flex items-center gap-[7px]">
            {c ? <span className={`size-[15px] rounded-full ${c}`} /> : <DashedDot size={15} />}
            <b className="text-[#f1ebfb]">{n}</b> {label}
          </li>
        ))}
      </ul>
      <Glyph icon={FaTowerBroadcast} className="absolute -right-2 -bottom-5 h-[93px] text-[#7df5b4]/12" />
    </section>
  );
}

function StatCard({ icon, tone, ghost, title, value, unit, children }: { icon: IconType; tone: string; ghost: string; title: string; value: string; unit: string; children: ReactNode }) {
  return (
    <section className={`${CARD} flex h-[149px] flex-col justify-between py-[12px]`}>
      <Glyph icon={icon} className={`absolute -right-2 -bottom-5 h-[93px] ${ghost}`} />
      <CardTitle icon={icon} tone={tone}>{title}</CardTitle>
      <div className="relative flex items-baseline gap-3">
        <strong className={`text-[38px] leading-9 tracking-normal ${tone}`}>{value}</strong>
        <span className="text-[17px] text-[#9b93b0]">{unit}</span>
      </div>
      <p className="relative text-[16px] leading-[22px] text-[#9b93b0]">{children}</p>
    </section>
  );
}

/* ---------- Chosen city ---------- */

function SubTitle({ icon, children }: { icon: IconType; children: ReactNode }) {
  return (
    <h3 className="flex items-center gap-[11px] text-[15px] leading-5 font-semibold tracking-[2px] text-[#6d6782]">
      <Glyph icon={icon} className="h-[15px] text-[#9a55ff]" />
      {children}
    </h3>
  );
}

const FACTORS: [IconType, string, string, number, number][] = [
  [FaPlugCircleXmark, "Faltas de AC", "bg-[#9a55ff]", 25, 25],
  [FaPowerOff, "Apagou sem AC", "bg-[#e84f62]", 25, 25],
  [FaArrowTrendDown, "Descarga profunda", "bg-[#86f5bd]", 20, 20],
  [FaCarBattery, "Falha na bateria", "bg-[#ff8044]", 15, 15],
  [FaGasPump, "Gerador", "bg-[#ffc34f]", 10, 10],
  [FaTemperatureHigh, "Temperatura", "bg-[#5a5368]", 0, 5],
];

function CityPanel() {
  const btn = "flex h-[46px] items-center justify-center gap-[10px] rounded-xl border border-[#2f5a50] bg-[#1c1e28] text-[17px] font-semibold tracking-normal text-[#86f5bd]";
  return (
    <section className="overflow-hidden rounded-[18px] border border-[#2f2149] bg-[#19131f] bg-gradient-to-b from-[#1d1629] to-[#18121f]">
      <PanelHead icon={FaLocationCrosshairs} title="CIDADE ESCOLHIDA" note="clique numa cidade do mapa" />
      <div className="px-[21px] pt-[15px] pb-[11px] text-[16px] text-[#9b93b0]">
        <div className="flex items-start justify-between border-b border-[#2b1f3f] pb-[11px]">
          <div className="tracking-normal">
            <h2 className="flex h-9 items-baseline gap-2 text-[32px] leading-9 font-bold text-[#f1ebfb]">
              Parauapebas <small className="text-[17px] leading-5 font-semibold text-[#5f5873]">PA</small>
            </h2>
            <p className="text-[17px] leading-6">1 nó Ciena · retificadora da mesma cidade</p>
          </div>
          <div className="flex h-[61px] w-[69px] flex-col items-center justify-center rounded-[14px] border border-[#a33c4d] bg-[#3a1c2b] tracking-normal text-[#e84f62]">
            <strong className="text-[28px] leading-8">95</strong>
            <span className="text-[14px] leading-4 font-semibold">CRÍTICO</span>
          </div>
        </div>
        <div className="border-b border-[#2b1f3f] pt-[10px] pb-[11px]">
          <SubTitle icon={FaTowerBroadcast}>TRANSPORTE</SubTitle>
          <div className="mt-[9px] flex h-6 items-center">
            <span className="size-[15px] rounded-full bg-[#1dc98c]" />
            <b className={`${MONO} mr-[11px] ml-[10px] text-[16px] text-[#f1ebfb]`}>PA.PRP.CO1.WS01</b>
            online
            <span className={`${MONO} ml-auto text-[16px]`}>23 ms · Q 12,6 · -12,8 dBm</span>
          </div>
        </div>
        <div className="border-b border-[#2b1f3f] pt-[11px] pb-[10px]">
          <SubTitle icon={FaBolt}>ENERGIA · 90 DIAS</SubTitle>
          <ul className="mt-[9px]">
            {FACTORS.map(([icon, label, tone, v, max]) => (
              <li key={label} className="flex h-[29px] items-center">
                <span className="flex w-[221px] shrink-0 items-center gap-[9px] text-[17px] tracking-normal">
                  <Glyph icon={icon} className="h-4" />
                  {label}
                </span>
                <span className="h-[11px] grow overflow-hidden rounded-full bg-[#100c16]">
                  <i className={`block h-full rounded-full ${tone}`} style={{ width: `${(v / max) * 100}%` }} />
                </span>
                <span className={`${MONO} w-[69px] shrink-0 text-right text-[16px] text-[#f1ebfb]`}>
                  {v}/{max}
                </span>
              </li>
            ))}
          </ul>
          <p className={`${MONO} mt-[7px] text-[16px] leading-6`}>RET-PA-PRP-01-NETSURE-01 · AC 227 V · DC 53 V · 3,40 kW</p>
        </div>
        <div className="pt-[10px]">
          <SubTitle icon={FaPowerOff}>SE ESTA CIDADE APAGAR</SubTitle>
          <p className="mt-[13px] text-[17px] leading-6 tracking-[0.02em]">
            <b className="text-[#e84f62]">6 cidades ficam sem caminho</b> (7 nós Ciena): Santana, Porto de Moz, Tucuruí, Prainha,
            <br />
            Óbidos e mais 1 · <b className="text-[#f1ebfb]">4</b> canais caem.
          </p>
          <div className="mt-[11px] grid grid-cols-2 gap-[11px]">
            <button className={btn}>
              <Glyph icon={FaBolt} className="h-4" /> Sinóptico do POP
            </button>
            <button className={btn}>
              <Glyph icon={FaPowerOff} className="h-4" /> Se o POP apagar
            </button>
          </div>
        </div>
      </div>
    </section>
  );
}

export default function App() {
  return (
    <div className="min-h-screen bg-[#121316] px-[34px] pt-[35px] pb-10 font-['Inter',sans-serif] tracking-[0.0125em]">
      <Header />
      <main className="mt-[34px] bg-[#08060f]">
        <Tabs />
        <div className="mt-[14px] grid grid-cols-[1705fr_772fr] gap-[15px]">
          <MapPanel />
          <div className="flex min-w-0 flex-col gap-[14px]">
            <NodesCard />
            <div className="grid grid-cols-2 gap-[14px]">
              <StatCard icon={FaBolt} tone="text-[#e84f62]" ghost="text-[#e84f62]/12" title="POPS EM RISCO ALTO · 90 D" value="2" unit="de 32 com energia medida">
                o pior: <b className="text-[#f1ebfb]">Parauapebas</b> · nota 95
              </StatCard>
              <StatCard icon={FaRoute} tone="text-[#ff8044]" ghost="text-[#ff8044]/12" title="ENLACES COM PONTA FRACA" value="4" unit="de 63 enlaces">
                <b className="text-[#f1ebfb]">34</b> com uma ponta sem energia
                <br />
                monitorada
              </StatCard>
              <StatCard icon={FaEyeSlash} tone="text-[#9c9eb0]" ghost="text-[#9c9eb0]/10" title="PONTOS CEGOS" value="26" unit="nós sem retificadora monitorada">
                em <b className="text-[#f1ebfb]">20</b> cidades · a fila deles está na tela de
                <br />
                <a href="#autonomia">
                  autonomia <FaArrowUpRightFromSquare className="mb-1 inline size-4" />
                </a>
              </StatCard>
              <StatCard icon={FaPowerOff} tone="text-[#e84f62]" ghost="text-[#e84f62]/12" title="DWDM CAIU NA FALTA DE AC · 90 D" value="3" unit="quedas · 4 h 56 fora">
                Parauapebas 2× · Pombal 1×
              </StatCard>
            </div>
            <CityPanel />
          </div>
        </div>
      </main>
    </div>
  );
}
